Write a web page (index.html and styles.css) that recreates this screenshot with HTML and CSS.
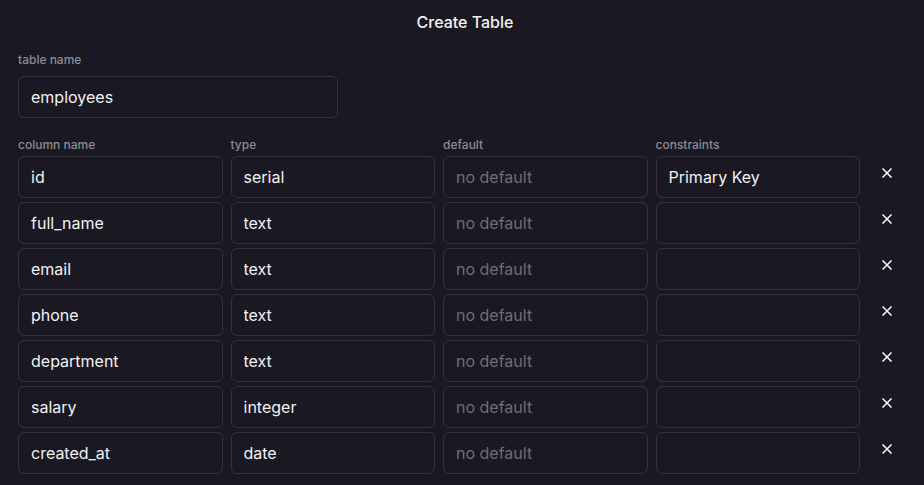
FILE: index.html
```html
<!DOCTYPE html>
<html lang="en">
<head>
<meta charset="utf-8">
<title>Create Table</title>
<link rel="stylesheet" href="styles.css">
</head>
<body>
<main class="dialog">
  <h1 class="title">Create Table</h1>
  <div class="field">
    <label class="label">table name</label>
    <input class="input name-input" value="employees">
  </div>
  <div class="columns">
    <span class="label">column name</span>
    <span class="label">type</span>
    <span class="label">default</span>
    <span class="label">constraints</span>
    <span></span>

    <input class="input" value="id"><input class="input" value="serial"><input class="input" placeholder="no default"><input class="input" value="Primary Key">
    <button class="remove" aria-label="remove"><svg viewBox="0 0 10 10" width="10" height="10"><path d="M0.5 0.5L9.5 9.5M9.5 0.5L0.5 9.5" stroke="#fff" stroke-width="1.5"/></svg></button>

    <input class="input" value="full_name"><input class="input" value="text"><input class="input" placeholder="no default"><input class="input">
    <button class="remove" aria-label="remove"><svg viewBox="0 0 10 10" width="10" height="10"><path d="M0.5 0.5L9.5 9.5M9.5 0.5L0.5 9.5" stroke="#fff" stroke-width="1.5"/></svg></button>

    <input class="input" value="email"><input class="input" value="text"><input class="input" placeholder="no default"><input class="input">
    <button class="remove" aria-label="remove"><svg viewBox="0 0 10 10" width="10" height="10"><path d="M0.5 0.5L9.5 9.5M9.5 0.5L0.5 9.5" stroke="#fff" stroke-width="1.5"/></svg></button>

    <input class="input" value="phone"><input class="input" value="text"><input class="input" placeholder="no default"><input class="input">
    <button class="remove" aria-label="remove"><svg viewBox="0 0 10 10" width="10" height="10"><path d="M0.5 0.5L9.5 9.5M9.5 0.5L0.5 9.5" stroke="#fff" stroke-width="1.5"/></svg></button>

    <input class="input" value="department"><input class="input" value="text"><input class="input" placeholder="no default"><input class="input">
    <button class="remove" aria-label="remove"><svg viewBox="0 0 10 10" width="10" height="10"><path d="M0.5 0.5L9.5 9.5M9.5 0.5L0.5 9.5" stroke="#fff" stroke-width="1.5"/></svg></button>

    <input class="input" value="salary"><input class="input" value="integer"><input class="input" placeholder="no default"><input class="input">
    <button class="remove" aria-label="remove"><svg viewBox="0 0 10 10" width="10" height="10"><path d="M0.5 0.5L9.5 9.5M9.5 0.5L0.5 9.5" stroke="#fff" stroke-width="1.5"/></svg></button>

    <input class="input" value="created_at"><input class="input" value="date"><input class="input" placeholder="no default"><input class="input">
    <button class="remove" aria-label="remove"><svg viewBox="0 0 10 10" width="10" height="10"><path d="M0.5 0.5L9.5 9.5M9.5 0.5L0.5 9.5" stroke="#fff" stroke-width="1.5"/></svg></button>
  </div>
</main>
</body>
</html>
```
FILE: styles.css
```css
* { box-sizing: border-box; }
html, body {
  margin: 0;
  background: #1a1822;
  color: #f2f2f4;
  font-family: Inter, "Noto Sans", sans-serif;
}
.dialog {
  padding: 0 18px;
  height: 485px;
  overflow: hidden;
}
.title {
  margin: 0;
  height: 44px;
  line-height: 44px;
  padding-left: 6px;
  text-align: center;
  font-size: 16px;
  font-weight: 500;
  color: #f2f2f4;
}
.field {
  display: flex;
  flex-direction: column;
  gap: 9px;
  padding-top: 8px;
}
.label {
  display: block;
  font-size: 12px;
  line-height: 15px;
  font-weight: 500;
  color: #8d8b95;
}
.input {
  height: 42px;
  width: 100%;
  padding: 0 12px;
  background: #1a1822;
  border: 1px solid #34323d;
  border-radius: 6px;
  color: #f2f2f4;
  font-family: Inter, "Noto Sans", sans-serif;
  font-size: 16px;
  outline: none;
  min-width: 0;
}
.input::placeholder { color: #6f6d77; }
.name-input { width: 320px; }
.columns {
  margin-top: 19px;
  display: grid;
  grid-template-columns: 1fr 1fr 1fr 1fr 38px;
  column-gap: 8px;
  row-gap: 4px;
}
.remove {
  align-self: start;
  justify-self: center;
  margin-top: 5px;
  width: 24px;
  height: 24px;
  padding: 0;
  border: none;
  background: transparent;
  display: flex;
  align-items: center;
  justify-content: center;
  cursor: pointer;
}
```
